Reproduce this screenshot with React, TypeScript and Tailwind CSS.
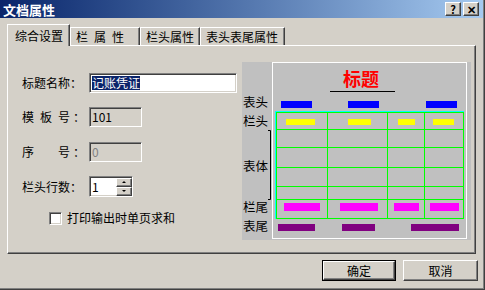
const sunken =
  "border border-t-[#808080] border-l-[#808080] border-r-white border-b-white shadow-[inset_1px_1px_0_#404040,inset_-1px_-1px_0_#d4d0c8]";
const raised =
  "border border-t-white border-l-white border-r-[#404040] border-b-[#404040] shadow-[inset_-1px_-1px_0_#808080]";

/* --------------------------------------
   Caption button
---------------------------------------*/
const CaptionButton = ({ children }: { children: React.ReactNode }) => (
  <div
    className={`w-[16px] h-[14px] bg-[#d4d0c8] flex items-center justify-center text-black text-[11px] font-bold leading-none ${raised}`}
  >
    {children}
  </div>
);

/* --------------------------------------
   Tab
---------------------------------------*/
const Tab = ({
  label,
  width,
  active,
  spaced,
}: {
  label: string;
  width: number;
  active?: boolean;
  spaced?: boolean;
}) => {
  if (active) {
    return (
      <div
        className="relative z-10 -mb-px h-[22px] bg-[#d4d0c8] border-l border-t border-l-white border-t-white border-r border-r-[#404040] shadow-[inset_-1px_0_0_#808080] pl-[7px] pt-[4px] text-[12px] leading-[14px] text-black"
        style={{ width }}
      >
        {label}
      </div>
    );
  }
  return (
    <div
      className={`h-[18px] border-l border-t border-l-white border-t-white border-r border-r-[#404040] shadow-[inset_-1px_0_0_#808080] pl-[5px] pt-[2px] text-[12px] leading-[14px] text-black ${
        spaced ? "tracking-[6px]" : ""
      }`}
      style={{ width }}
    >
      {label}
    </div>
  );
};

/* --------------------------------------
   Preview drawing
---------------------------------------*/
const Preview = () => {
  const cols = [34, 85, 145, 182, 221];
  const rows = [50, 67, 85, 105, 124, 137, 156];
  return (
    <svg width="229" height="178" viewBox="0 0 229 178" className="block">
      <rect x="0" y="0" width="229" height="178" fill="#c0c0c0" />
      <rect x="30.5" y="0.5" width="194" height="176" fill="none" stroke="#ffffff" />

      <text x="119" y="24" textAnchor="middle" fill="#ff0000" fontSize="18" fontWeight="bold" fontFamily="Noto Sans CJK SC, sans-serif">
        标题
      </text>
      <line x1="88" y1="29.5" x2="153" y2="29.5" stroke="#000" />

      {/* 表头 */}
      <rect x="39" y="39" width="31" height="7" fill="#0000ff" />
      <rect x="106" y="39" width="31" height="7" fill="#0000ff" />
      <rect x="184" y="39" width="31" height="7" fill="#0000ff" />

      {/* grid */}
      <rect x="33.5" y="49.5" width="188" height="107" fill="none" stroke="#00ffff" />
      {rows.map((y) => (
        <line key={y} x1={34} y1={y + 0.5} x2={221} y2={y + 0.5} stroke="#00ff00" />
      ))}
      {cols.map((x) => (
        <line key={x} x1={x + 0.5} y1={50} x2={x + 0.5} y2={157} stroke="#00ff00" />
      ))}

      {/* 栏头 */}
      <rect x="44" y="57" width="29" height="6" fill="#ffff00" />
      <rect x="106" y="57" width="23" height="6" fill="#ffff00" />
      <rect x="156" y="57" width="17" height="6" fill="#ffff00" />
      <rect x="191" y="57" width="21" height="6" fill="#ffff00" />

      {/* 栏尾 */}
      <rect x="42" y="141" width="36" height="8" fill="#ff00ff" />
      <rect x="98" y="141" width="38" height="8" fill="#ff00ff" />
      <rect x="152" y="141" width="25" height="8" fill="#ff00ff" />
      <rect x="188" y="141" width="29" height="8" fill="#ff00ff" />

      {/* 表尾 */}
      <rect x="36" y="162" width="37" height="7" fill="#800080" />
      <rect x="100" y="162" width="33" height="7" fill="#800080" />
      <rect x="169" y="162" width="48" height="7" fill="#800080" />

      {/* bracket */}
      <polyline points="26,68.5 28.5,68.5 28.5,137.5 26,137.5" fill="none" stroke="#000" />

      <g fontSize="12.5" fill="#000" fontFamily="Noto Sans CJK SC, sans-serif">
        <text x="1" y="45">表头</text>
        <text x="1" y="64">栏头</text>
        <text x="1" y="109">表体</text>
        <text x="1" y="150">栏尾</text>
        <text x="1" y="169">表尾</text>
      </g>
    </svg>
  );
};

export default function App() {
  return (
    <div className="w-[485px] h-[290px] bg-[#d4d0c8] shadow-[inset_-1px_-1px_0_#404040,inset_-2px_-2px_0_#808080] font-['Noto_Sans_CJK_SC',sans-serif] text-black overflow-hidden">
      {/* Title bar */}
      <div className="h-[18px] mr-[2px] bg-linear-to-r from-[#0a246a] to-[#a6caf0] flex items-center justify-between">
        <span className="pl-[3px] text-white text-[13px] font-bold leading-none">文档属性</span>
        <div className="flex gap-[2px] pr-[4px]">
          <CaptionButton>?</CaptionButton>
          <CaptionButton>✕</CaptionButton>
        </div>
      </div>

      {/* Tabs */}
      <div className="mt-[6px] ml-[7px] h-[21px] flex items-end">
        <Tab label="综合设置" width={63} active />
        <Tab label="栏属性" width={70} spaced />
        <Tab label="栏头属性" width={60} />
        <Tab label="表头表尾属性" width={85} />
      </div>

      {/* Panel */}
      <div className="ml-[7px] w-[469px] h-[209px] border border-t-white border-l-white border-r-[#404040] border-b-[#404040] shadow-[inset_-1px_-1px_0_#808080] flex items-start">
        <div className="ml-[14px] pt-[27px] w-[215px] flex flex-col text-[12px]">
          <div className="flex items-center h-[20px]">
            <span className="w-[67px]">标题名称：</span>
            <div className={`w-[148px] h-[20px] bg-white flex items-center pl-[2px] ${sunken}`}>
              <span className="bg-[#0a246a] text-white leading-[14px]">记账凭证</span>
            </div>
          </div>

          <div className="flex items-center h-[20px] mt-[14px]">
            <span className="w-[67px] flex">
              <span className="w-[18px]">模</span>
              <span className="w-[18px]">板</span>
              <span className="w-[15px]">号</span>
              <span>：</span>
            </span>
            <div className={`w-[53px] h-[20px] bg-[#d4d0c8] flex items-center pl-[2px] ${sunken}`}>101</div>
          </div>

          <div className="flex items-center h-[20px] mt-[15px]">
            <span className="w-[67px] flex">
              <span className="w-[36px]">序</span>
              <span className="w-[15px]">号</span>
              <span>：</span>
            </span>
            <div className={`w-[53px] h-[20px] bg-[#d4d0c8] text-[#808080] flex items-center pl-[2px] ${sunken}`}>0</div>
          </div>

          <div className="flex items-center h-[21px] mt-[14px]">
            <span className="w-[67px]">栏头行数：</span>
            <div className={`w-[44px] h-[21px] bg-white flex items-center justify-between pl-[2px] ${sunken}`}>
              <span>1</span>
              <div className="flex flex-col">
                <div className={`w-[16px] h-[9px] bg-[#d4d0c8] flex items-center justify-center ${raised}`}>
                  <span className="w-0 h-0 border-l-[2px] border-r-[2px] border-b-[2px] border-l-transparent border-r-transparent border-b-black" />
                </div>
                <div className={`w-[16px] h-[9px] bg-[#d4d0c8] flex items-center justify-center ${raised}`}>
                  <span className="w-0 h-0 border-l-[2px] border-r-[2px] border-t-[2px] border-l-transparent border-r-transparent border-t-black" />
                </div>
              </div>
            </div>
          </div>

          <div className="flex items-center h-[16px] mt-[13px] ml-[27px]">
            <div className={`w-[13px] h-[13px] bg-white ${sunken}`} />
            <span className="ml-[5px]">打印输出时单页求和</span>
          </div>
        </div>

        <div className="mt-[16px] ml-[5px]">
          <Preview />
        </div>
      </div>

      {/* Buttons */}
      <div className="mt-[6px] pr-[7px] flex justify-end gap-[7px]">
        <div className="w-[74px] h-[21px] border border-black">
          <div className={`w-full h-full flex items-center justify-center text-[12px] ${raised}`}>确定</div>
        </div>
        <div className={`w-[75px] h-[21px] flex items-center justify-center text-[12px] ${raised}`}>取消</div>
      </div>
    </div>
  );
}
